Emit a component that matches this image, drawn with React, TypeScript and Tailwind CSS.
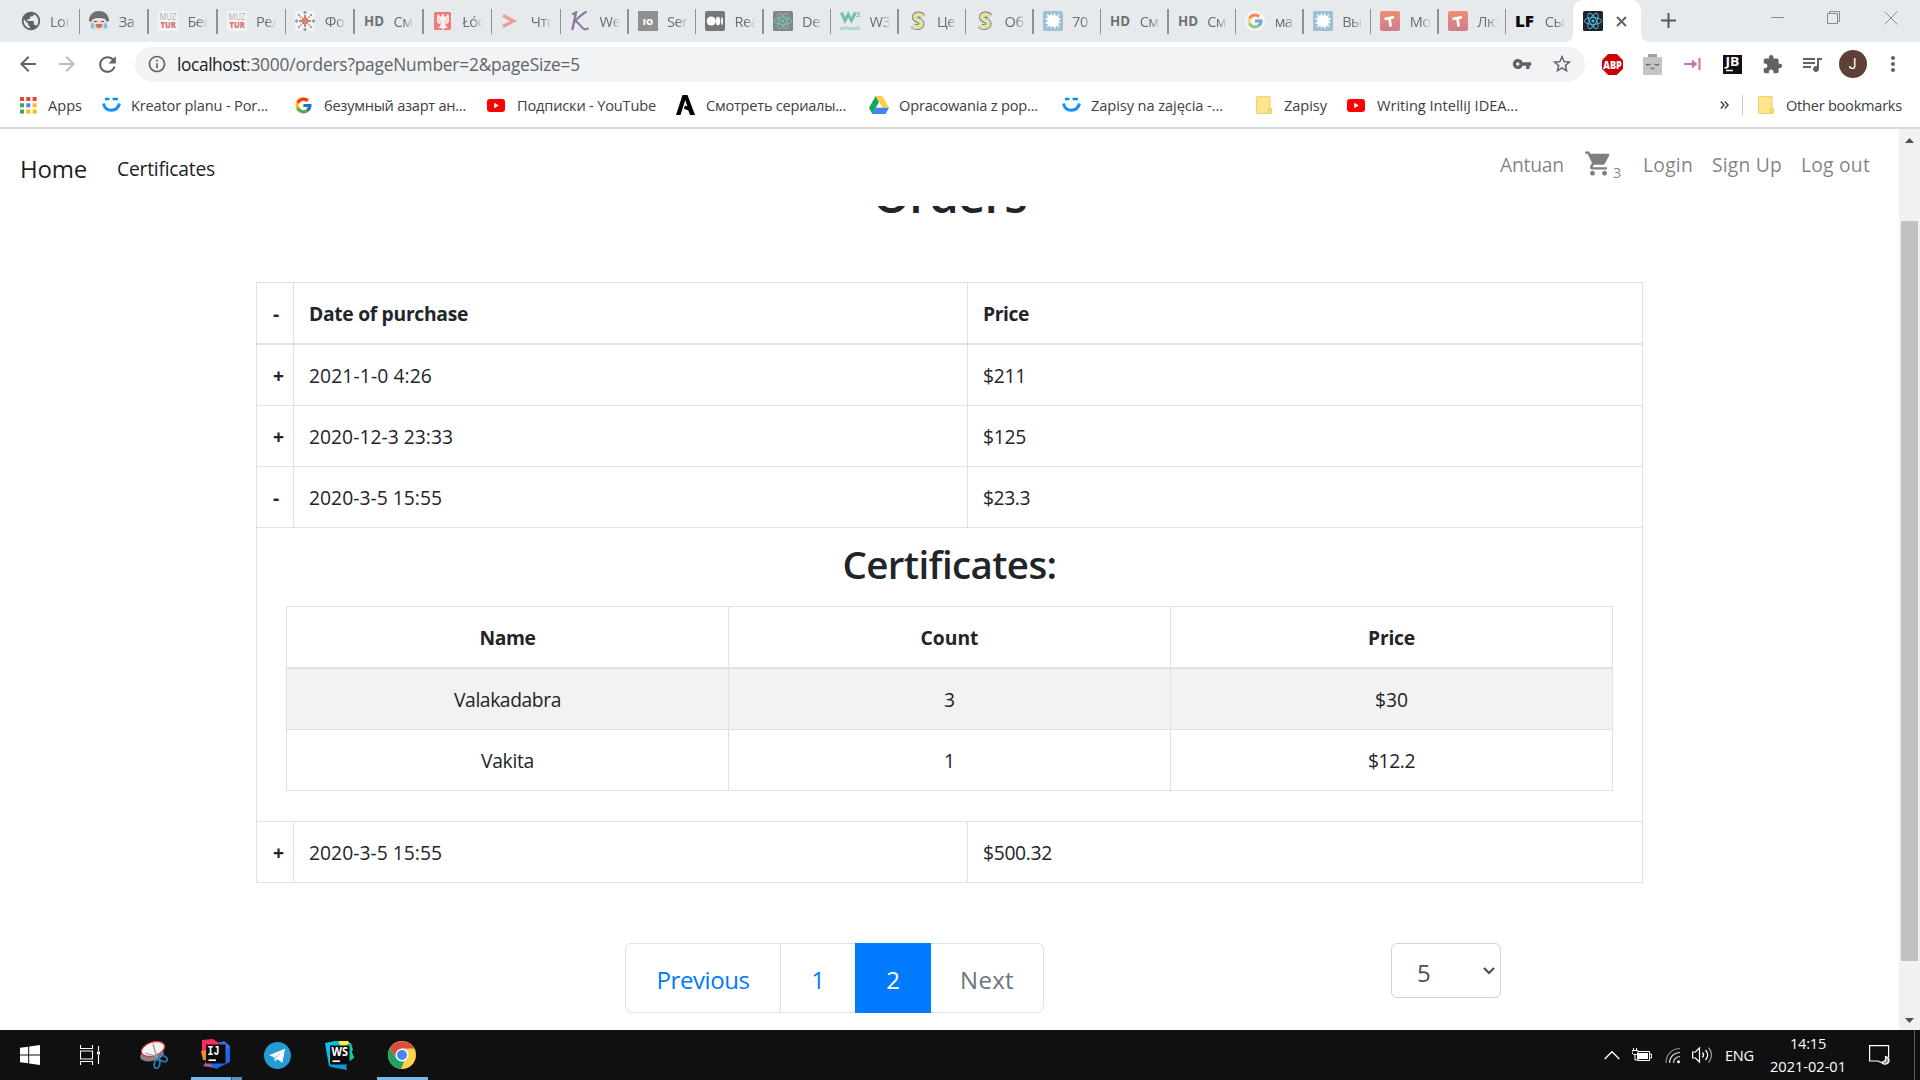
import React, { useLayoutEffect, useRef, useState } from 'react';
import {
  MdArrowBack, MdArrowForward, MdRefresh, MdInfoOutline, MdVpnKey, MdStarBorder,
  MdExtension, MdQueueMusic, MdMoreVert, MdShoppingCart, MdPublic,
} from 'react-icons/md';
import { FcGoogle } from 'react-icons/fc';

/* Text set to a fixed advance width through letter spacing. */
function Label({ w, className = '', children }: { w: number; className?: string; children: string }) {
  const ref = useRef<HTMLSpanElement>(null);
  const [spacing, setSpacing] = useState(0);
  useLayoutEffect(() => {
    if (!ref.current) return;
    const natural = ref.current.getBoundingClientRect().width;
    setSpacing((w - natural) / children.length);
  }, [w, children]);
  return (
    <span ref={ref} style={{ letterSpacing: spacing }} className={`inline-block shrink-0 whitespace-pre ${className}`}>
      {children}
    </span>
  );
}

/* ---------- Favicons ---------- */

function MuzTur() {
  return (
    <svg width="20" height="20" viewBox="0 0 20 20">
      <rect width="20" height="20" fill="#f3f3f3" />
      <text x="1.500" y="9" fontSize="9" fontFamily="Open Sans, sans-serif" fill="#b0b0b0" textLength="17" lengthAdjust="spacingAndGlyphs">MUZ</text>
      <text x="2.500" y="16.500" fontSize="9" fontWeight="800" fontFamily="Open Sans, sans-serif" fill="#df7077" textLength="15.500" lengthAdjust="spacingAndGlyphs">TUR</text>
    </svg>
  );
}

function Face() {
  return (
    <svg width="20" height="20" viewBox="0 0 20 20">
      <path d="M3 9h14v5c0 3-3.500 5.500-7 5.500S3 17 3 14z" fill="#f0d8d0" />
      <path d="M0 10C0 3 5 0 10 0s10 3 10 10l-2 1-2-3c-4-1.500-8-1.500-12 0l-2 3z" fill="#6c6e70" />
      <path d="M5 10.500l3 0M12 10.500l3 0" stroke="#555" strokeWidth="1.200" />
      <path d="M6.500 13h7c0 3-1.700 4-3.500 4s-3.500-1-3.500-4z" fill="#c0736f" />
      <path d="M2.500 12h2l1 5-3 1-1-2zM17.500 12h-2l-1 5 3 1 1-2z" fill="#6fc8ea" />
    </svg>
  );
}

function Ornament() {
  return (
    <svg width="20" height="20" viewBox="0 0 20 20">
      <rect width="20" height="20" fill="#f3f3f3" />
      <g fill="#7fa9cc">
        <path d="M9 0h2v3H9zM8 1h4v1H8zM9 17h2v3H9zM8 18h4v1H8zM0 9h3v2H0zM1 8h1v4H1zM17 9h3v2h-3zM18 8h1v4h-1z" />
        <path d="M3 3h2v2H3zM15 3h2v2h-2zM3 15h2v2H3zM15 15h2v2h-2z" />
      </g>
      <path d="M9 4h2v3h2v2h3v2h-3v2h-2v3H9v-3H7v-2H4V9h3V7h2z" fill="#df7a72" />
      <path d="M5 5h2v2H5zM13 5h2v2h-2zM5 13h2v2H5zM13 13h2v2h-2z" fill="#e9b97b" />
      <path d="M7 7h1.500v1.500H7zM11.500 7H13v1.500h-1.500zM7 11.500h1.500V13H7zM11.500 11.500H13V13h-1.500z" fill="#df7a72" />
      <path d="M8.500 8.500h3v3h-3z" fill="#78b48a" />
    </svg>
  );
}

function HD() {
  return (
    <svg width="20" height="20" viewBox="0 0 20 20">
      <text x="0" y="15" fontSize="14" fontWeight="700" fontFamily="Open Sans, sans-serif" fill="#6f7173" textLength="20" lengthAdjust="spacingAndGlyphs">HD</text>
    </svg>
  );
}

function Eagle() {
  return (
    <svg width="20" height="20" viewBox="0 0 20 20">
      <rect x="1" y="1" width="17" height="18" rx="1" fill="#ef7b7b" />
      <path d="M9 3l2 0 0 2 1 1 3-3 1 2v6l-2 2-2-1 1 3 2 2h-3l-2 2-2-2H5l2-2 1-3-2 1-2-2V5l1-2 3 3 1-1z" fill="#faf0f0" />
      <path d="M6 6v5M14 6v5M8 9v3M12 9v3" stroke="#ef9b9b" strokeWidth=".6" />
    </svg>
  );
}

function Angle() {
  return (
    <svg width="20" height="20" viewBox="0 0 20 20">
      <path d="M2 4.500l10.500 5.500L2 15.500" fill="none" stroke="#eb9d96" strokeWidth="3.400" />
    </svg>
  );
}

function KLetter() {
  return (
    <svg width="20" height="20" viewBox="0 0 20 20" fill="none" stroke="#8c7a9e" strokeLinecap="round">
      <path d="M3 3l3-1.500L2.500 18" strokeWidth="2.400" />
      <path d="M16 1C12 3 8 7 5 10c4 1 6 7 9 8 1.500.5 2.500 0 4-.5" strokeWidth="2" />
    </svg>
  );
}

function Square10() {
  return (
    <svg width="20" height="20" viewBox="0 0 20 20">
      <rect width="20" height="20" fill="#8f8f8f" />
      <text x="10" y="13.500" fontSize="9" fontWeight="800" fontFamily="Open Sans, sans-serif" textAnchor="middle" fill="#fff">IO</text>
    </svg>
  );
}

function Medium() {
  return (
    <svg width="20" height="20" viewBox="0 0 20 20">
      <rect width="20" height="20" rx="2" fill="#757778" />
      <g fill="#fff">
        <circle cx="6.200" cy="10" r="4.600" />
        <ellipse cx="13" cy="10" rx="2.200" ry="4.200" />
        <ellipse cx="17" cy="10" rx="0.900" ry="4" />
      </g>
    </svg>
  );
}

function Atom({ bg, fg }: { bg: string; fg: string }) {
  return (
    <svg width="20" height="20" viewBox="0 0 20 20">
      <rect width="20" height="20" rx="1.500" fill={bg} />
      <g fill="none" stroke={fg} strokeWidth="0.950">
        <ellipse cx="10" cy="10" rx="8.600" ry="3.400" />
        <ellipse cx="10" cy="10" rx="8.600" ry="3.400" transform="rotate(60 10 10)" />
        <ellipse cx="10" cy="10" rx="8.600" ry="3.400" transform="rotate(120 10 10)" />
      </g>
      <circle cx="10" cy="10" r="1.600" fill={fg} />
    </svg>
  );
}

function W3() {
  return (
    <svg width="20" height="20" viewBox="0 0 20 20">
      <path d="M1.500 1.500l3.500 8 3.200-6 3.200 6 4-8" fill="none" stroke="#73c3a6" strokeWidth="3" />
      <text x="16" y="6" fontSize="7" fontWeight="700" fontFamily="Open Sans, sans-serif" fill="#73c3a6">3</text>
      <text x="0" y="19" fontSize="5.500" fontWeight="600" fontFamily="Open Sans, sans-serif" fill="#73c3a6" textLength="20">schools</text>
    </svg>
  );
}

function SLetter() {
  const d = 'M14.500 5.500C12.500 2.500 6.500 3 7 6.500c.5 3 6.500 2.500 6.500 6C13.500 16.500 7.500 17 5 14.500';
  return (
    <svg width="20" height="20" viewBox="0 0 20 20" fill="none">
      <path d={d} stroke="#77797b" strokeWidth="6" />
      <path d={d} stroke="#d9d9d9" strokeWidth="4.200" />
      <path d={d} stroke="#e9e486" strokeWidth="2.400" />
    </svg>
  );
}

function Splat() {
  return (
    <svg width="20" height="20" viewBox="0 0 20 20">
      <rect width="20" height="20" rx="1.500" fill="#9fc1d5" />
      <circle cx="10" cy="10" r="5" fill="#fff" />
      <path d="M10 5l2-3 .8 3.500L16.500 3 15 6.500l3 1L15.500 10l2.500 2-3 .6 1.500 3.900-3.300-1.800L12 18l-2-3-2.200 2.500L7.500 14.500 3.800 16.500 5.200 13 2 12.500 4.800 10 2 7.500l3-.8L3.500 3 7.200 5 8 2z" fill="#fff" />
    </svg>
  );
}

function TLetter() {
  return (
    <svg width="20" height="20" viewBox="0 0 20 20">
      <defs>
        <linearGradient id="tgrad" x1="0" y1="0" x2="0" y2="1">
          <stop offset="0" stopColor="#ef8d78" />
          <stop offset="1" stopColor="#cb7e8b" />
        </linearGradient>
      </defs>
      <rect width="20" height="20" rx="2" fill="url(#tgrad)" />
      <path d="M4.500 8l9.500-1.800M9.600 7.500l1 8" stroke="#fff" strokeWidth="2.700" fill="none" />
    </svg>
  );
}

function LF() {
  return (
    <svg width="20" height="20" viewBox="0 0 20 20">
      <text x="0" y="15.500" fontSize="16" fontWeight="800" fontFamily="Open Sans, sans-serif" fill="#0a0a0a" textLength="19" lengthAdjust="spacingAndGlyphs">LF</text>
    </svg>
  );
}

function GoogleDim() {
  return (
    <span className="flex size-5 items-center justify-center rounded-full bg-[#f6f7f8]">
      <FcGoogle size={18} className="opacity-60" />
    </span>
  );
}

const tabs: { icon: React.ReactNode; title: string; wide?: boolean }[] = [
  { icon: <MdPublic size={22} className="-m-px text-[#5f6368]" />, title: 'Lon', wide: true },
  { icon: <Face />, title: 'За', wide: true },
  { icon: <MuzTur />, title: 'Бес', wide: true },
  { icon: <MuzTur />, title: 'Рел', wide: true },
  { icon: <Ornament />, title: 'Фо', wide: true },
  { icon: <HD />, title: 'См', wide: true },
  { icon: <Eagle />, title: 'Łód', wide: true },
  { icon: <Angle />, title: 'Что', wide: true },
  { icon: <KLetter />, title: 'We' },
  { icon: <Square10 />, title: 'Ser' },
  { icon: <Medium />, title: 'Rea' },
  { icon: <Atom bg="#838589" fg="#78c5b0" />, title: 'De' },
  { icon: <W3 />, title: 'W3' },
  { icon: <SLetter />, title: 'Це' },
  { icon: <SLetter />, title: 'Об' },
  { icon: <Splat />, title: '70' },
  { icon: <HD />, title: 'См' },
  { icon: <HD />, title: 'См' },
  { icon: <GoogleDim />, title: 'ма' },
  { icon: <Splat />, title: 'Вы' },
  { icon: <TLetter />, title: 'Мо' },
  { icon: <TLetter />, title: 'Лю' },
  { icon: <LF />, title: 'Сы' },
];

function TabStrip() {
  return (
    <div className="flex h-[42px] shrink-0 bg-[#e7eaed] pl-[11.500px]">
      {tabs.map((t, i) => (
        <div key={i} className={`flex shrink-0 items-center ${t.wide ? 'w-[68.7px]' : 'w-[67.53px]'}`}>
          <span className="ml-[9px] w-5 shrink-0">{t.icon}</span>
          <span className="ml-[9.500px] w-[21px] shrink-0 overflow-hidden whitespace-nowrap text-[14.600px] leading-5 tracking-[-0.500px] text-[#6a6d71] [mask-image:linear-gradient(to_right,black_50%,transparent)]">
            {t.title}
          </span>
          {i < 22 && <span className="ml-auto h-[25px] w-[1.500px] bg-[#8f9295]" />}
        </div>
      ))}
      <div className="relative -ml-[1px] flex h-[42px] w-[68px] shrink-0 items-center rounded-t-[10px] bg-white">
        <svg className="absolute bottom-0 -left-[8px]" width="8" height="8" viewBox="0 0 8 8"><path d="M8 0v8H0a8 8 0 0 0 8-8z" fill="#fff" /></svg>
        <svg className="absolute -right-[8px] bottom-0" width="8" height="8" viewBox="0 0 8 8"><path d="M0 0v8h8a8 8 0 0 1-8-8z" fill="#fff" /></svg>
        <span className="ml-[10px]"><Atom bg="#20232a" fg="#51b9d8" /></span>
        <svg className="ml-[13px]" width="11" height="11" viewBox="0 0 11 11"><path d="M1 1l9 9M10 1l-9 9" stroke="#5f6368" strokeWidth="2" /></svg>
      </div>
      <svg className="mt-[13px] ml-[20px] shrink-0" width="15" height="15" viewBox="0 0 15 15"><path d="M7.500 0v15M0 7.500h15" stroke="#55585c" strokeWidth="2" /></svg>
      <div className="ml-auto flex h-[36px] items-center gap-[43px] pr-[22px]">
        <svg width="14" height="14" viewBox="0 0 14 14"><path d="M1 6.500h13" stroke="#8a8c8e" strokeWidth="1" /></svg>
        <svg width="14" height="14" viewBox="0 0 14 14" fill="none" stroke="#8a8c8e"><path d="M.5 2.500h10v10H.5zM2.500 2.500V.5h10v10h-2" /></svg>
        <svg width="14" height="14" viewBox="0 0 14 14"><path d="M.5.5l13 13M13.500.5L.5 13.500" stroke="#8a8c8e" /></svg>
      </div>
    </div>
  );
}

function Toolbar() {
  return (
    <div className="flex h-[44px] shrink-0 items-center bg-white text-[#5f6368]">
      <span className="flex w-[47px] justify-center pl-[8px]"><MdArrowBack size={24} /></span>
      <span className="flex w-[40px] justify-center text-[#babcbe]"><MdArrowForward size={24} /></span>
      <span className="flex w-[40px] justify-center"><MdRefresh size={25} /></span>
      <div className="ml-[8px] flex h-[35px] w-[1450px] shrink-0 items-center rounded-full bg-[#f1f3f4] pl-[12px]">
        <MdInfoOutline size={20} />
        <Label w={69} className="ml-[10px] pt-px text-[17.300px] leading-6 text-[#202124]">localhost</Label>
        <Label w={334} className="pt-px text-[17.300px] leading-6">:3000/orders?pageNumber=2&pageSize=5</Label>
        <div className="ml-auto flex items-center gap-[19px] pr-[12px]">
          <MdVpnKey size={20} />
          <MdStarBorder size={22} />
        </div>
      </div>
      <div className="ml-[7px] flex shrink-0 items-center [&>*]:flex [&>*]:w-10 [&>*]:justify-center">
        <span>
          <svg width="21" height="21" viewBox="0 0 21 21">
            <path d="M6.200 0h8.600L21 6.200v8.600L14.800 21H6.200L0 14.800V6.200z" fill="#cc0000" />
            <text x="1.300" y="14.500" fontSize="11" fontWeight="800" fontFamily="Open Sans, sans-serif" fill="#fff" textLength="18.500" lengthAdjust="spacingAndGlyphs">ABP</text>
          </svg>
        </span>
        <span>
          <svg width="19" height="21" viewBox="0 0 19 21">
            <path d="M5 0h9v3H5z" fill="#a2a2a2" />
            <rect y="3" width="19" height="18" rx="1" fill="#c4c4c4" />
            <path d="M3 10q2 2 4.500 0M11.500 10q2.500 2 4.500 0M8 14q1.500 1.300 3 0" stroke="#666" strokeWidth="1.200" fill="none" />
          </svg>
        </span>
        <span>
          <svg width="17" height="12" viewBox="0 0 17 12"><path d="M0 6h11M15.500 0v12" stroke="#c473b6" strokeWidth="2" /><path d="M8 1.500L13.500 6 8 10.500z" fill="#c473b6" /></svg>
        </span>
        <span>
          <svg width="19" height="19" viewBox="0 0 19 19">
            <rect width="19" height="19" fill="#101010" />
            <text x="2.500" y="11" fontSize="12" fontWeight="700" fontFamily="Open Sans, sans-serif" fill="#fff" textLength="14" lengthAdjust="spacingAndGlyphs">JB</text>
            <path d="M3 15.500h7" stroke="#fff" strokeWidth="1.500" />
          </svg>
        </span>
        <span><MdExtension size={21} /></span>
        <span><MdQueueMusic size={24} /></span>
        <span>
          <i className="ml-px flex size-7 items-center justify-center rounded-full bg-[#5d4037] font-[Roboto,sans-serif] text-[14px] not-italic text-white">J</i>
        </span>
        <span><MdMoreVert size={24} className="ml-px" /></span>
      </div>
    </div>
  );
}

function AppsIcon() {
  const c = ['#ea4335', '#ea4335', '#ea4335', '#34a853', '#4285f4', '#fbbc05', '#34a853', '#fbbc05', '#fbbc05'];
  return (
    <svg width="17" height="17" viewBox="0 0 17 17" className="ml-0.5">
      {c.map((f, i) => <rect key={i} x={(i % 3) * 6.300} y={Math.floor(i / 3) * 6.300} width="4" height="4" fill={f} />)}
    </svg>
  );
}
function Smile() {
  return (
    <svg width="19" height="16" viewBox="0 0 19 16" fill="none" stroke="#1290f5" className="ml-px">
      <path d="M3 2h4.500M10.500 2H16" strokeWidth="2.400" />
      <path d="M1.500 6.500c2 9 13.500 9 16 0" strokeWidth="3" />
    </svg>
  );
}
function YouTube() {
  return (
    <svg width="18" height="13" viewBox="0 0 18 13"><rect width="18" height="13" rx="3" fill="#f00" /><path d="M7.200 3.800l4.600 2.700-4.600 2.700z" fill="#fff" /></svg>
  );
}
function ALetter() {
  return (
    <svg width="19" height="20" viewBox="0 0 19 20"><path d="M0 20L6.500 0h5L19 20h-5l-1.600-4.500-4.500-1.700L9 10.500l2.300.8L9.300 5 4.500 20z" fill="#000" /></svg>
  );
}
function Drive() {
  return (
    <svg width="20" height="18" viewBox="0 0 20 18">
      <path d="M6.700 0L0 11.700 3.300 18 10 6z" fill="#11a861" />
      <path d="M6.700 0h6.600L20 11.700h-6.500z" fill="#ffcf48" />
      <path d="M6.500 11.700H20L16.700 18H3.300z" fill="#4285f4" />
    </svg>
  );
}
function Folder() {
  return (
    <svg width="16" height="18" viewBox="0 0 16 18" className="ml-[2px]">
      <path d="M1 .5h13v17H1q-.5 0-.5-.5V1z" fill="#ffe48e" stroke="#f1d06a" />
      <path d="M12.500 12.500h3V17l-1 .5h-2z" fill="#ffd95e" stroke="#edc34b" strokeWidth=".8" />
    </svg>
  );
}

const bookmarks = [
  { icon: <AppsIcon />, text: 'Apps', tw: 34, box: 'w-[83px]' },
  { icon: <Smile />, text: 'Kreator planu - Por...', tw: 137, box: 'w-[193px]' },
  { icon: <FcGoogle size={19} />, text: 'безумный азарт ан...', tw: 142, box: 'w-[193px]' },
  { icon: <YouTube />, text: 'Подписки - YouTube', tw: 139, box: 'w-[189px]' },
  { icon: <ALetter />, text: 'Смотреть сериалы...', tw: 140, box: 'w-[193px]' },
  { icon: <Drive />, text: 'Opracowania z pop...', tw: 139, box: 'w-[192px]' },
  { icon: <Smile />, text: 'Zapisy na zajęcia -...', tw: 132, box: 'w-[193px]' },
  { icon: <Folder />, text: 'Zapisy', tw: 43, box: 'w-[93px]' },
  { icon: <YouTube />, text: 'Writing IntelliJ IDEA...', tw: 141, box: 'w-[190px]' },
];

function BookmarkBar() {
  return (
    <div className="flex h-[43px] shrink-0 items-center border-b-2 border-[#dadce0] bg-white pb-[3px] pl-[18px] text-[14.600px] leading-5 text-[#3c4043]">
      {bookmarks.map((b, i) => (
        <div key={i} className={`flex h-full shrink-0 items-center ${b.box}`}>
          <span className="flex w-[30px] shrink-0">{b.icon}</span>
          <Label w={b.tw}>{b.text}</Label>
        </div>
      ))}
      <svg className="ml-auto" width="9" height="8" viewBox="0 0 9 8" fill="none" stroke="#44474a" strokeWidth="1.500"><path d="M.8.5L4 4 .8 7.500M4.800.5L8 4 4.800 7.500" /></svg>
      <span className="ml-[13px] h-5 w-px bg-[#c4c7cb]" />
      <span className="ml-[13px] flex w-[30px]"><Folder /></span>
      <Label w={116} className="mr-[18px]">Other bookmarks</Label>
    </div>
  );
}

/* ---------- Page ---------- */

function Navbar() {
  return (
    <nav className="relative z-10 flex h-[77px] shrink-0 bg-white pl-[20px] text-[19.300px] leading-[30px]">
      <Label w={67} className="mt-[21px] h-[38px] text-[24px] leading-[38px] text-black/90">Home</Label>
      <Label w={98} className="mt-[25px] ml-[30px] text-black/90">Certificates</Label>
      <div className="mt-[21px] ml-auto flex h-[30px] pr-[29px] text-black/50">
        <Label w={64}>Antuan</Label>
        <MdShoppingCart size={29} className="mt-[-1px] ml-[20px]" />
        <span className="mt-[8px] w-[10px] text-[14.500px]">3</span>
        <Label w={50} className="ml-[20px]">Login</Label>
        <Label w={70} className="ml-[19px]">Sign Up</Label>
        <Label w={69} className="ml-[19px]">Log out</Label>
      </div>
    </nav>
  );
}

function OrderRow({ open, date, dw, price, pw }: { open?: boolean; date: string; dw: number; price: string; pw: number }) {
  return (
    <div className="flex h-[61px] [&>*]:flex [&>*]:items-center [&>*]:border-r [&>*]:border-b [&>*]:border-[#dee2e6] [&>*]:pt-[2px]">
      <div className="w-[37px] pl-4 font-bold">{open ? '-' : '+'}</div>
      <div className="w-[674px] pl-[15px]"><Label w={dw}>{date}</Label></div>
      <div className="w-[675px] pl-[15px]"><Label w={pw}>{price}</Label></div>
    </div>
  );
}

const certificates = [
  { name: 'Valakadabra', nw: 107, count: '3', price: '$30', pw: 33 },
  { name: 'Vakita', nw: 53, count: '1', price: '$12.2', pw: 47 },
];

function CertificateTable() {
  return (
    <div className="mt-[15px] ml-[29px] w-[1327px] border-t border-l border-[#dee2e6]">
      <div className="flex h-[62px] font-bold [&>*]:flex [&>*]:items-center [&>*]:justify-center [&>*]:border-r [&>*]:border-b-2 [&>*]:border-[#dee2e6] [&>*]:pt-[2px]">
        <div className="w-[442px]"><Label w={56}>Name</Label></div>
        <div className="w-[442px]"><Label w={58}>Count</Label></div>
        <div className="w-[442px]"><Label w={47}>Price</Label></div>
      </div>
      {certificates.map((c, i) => (
        <div key={i} className={`flex h-[61px] [&>*]:flex [&>*]:items-center [&>*]:justify-center [&>*]:border-r [&>*]:border-b [&>*]:border-[#dee2e6] [&>*]:pt-[2px] ${i === 0 ? 'bg-[#f2f2f2]' : ''}`}>
          <div className="w-[442px]"><Label w={c.nw}>{c.name}</Label></div>
          <div className="w-[442px]"><Label w={11}>{c.count}</Label></div>
          <div className="w-[442px]"><Label w={c.pw}>{c.price}</Label></div>
        </div>
      ))}
    </div>
  );
}

function Orders() {
  return (
    <main className="flex flex-col">
      <div className="-mt-[41px] flex h-[57px] justify-center"><Label w={154} className="text-[48px] leading-[60px] font-semibold">Orders</Label></div>
      <div className="mt-[60px] ml-[256px] w-[1387px] border-t border-l border-[#dee2e6] text-[19.300px] leading-[30px]">
        <div className="flex h-[62px] font-bold [&>*]:flex [&>*]:items-center [&>*]:border-r [&>*]:border-b-2 [&>*]:border-[#dee2e6] [&>*]:pt-[2px]">
          <div className="w-[37px] pl-4">-</div>
          <div className="w-[674px] pl-[15px]"><Label w={159}>Date of purchase</Label></div>
          <div className="w-[675px] pl-[15px]"><Label w={46}>Price</Label></div>
        </div>
        <OrderRow date="2021-1-0 4:26" dw={123} price="$211" pw={43} />
        <OrderRow date="2020-12-3 23:33" dw={144} price="$125" pw={43} />
        <OrderRow open date="2020-3-5 15:55" dw={133} price="$23.3" pw={47} />
        <div className="flex h-[294px] flex-col border-r border-b border-[#dee2e6]">
          <div className="mt-[16px] flex h-[47px] justify-center"><Label w={214} className="text-[38.500px] leading-[40px] font-semibold">Certificates:</Label></div>
          <CertificateTable />
        </div>
        <OrderRow date="2020-3-5 15:55" dw={133} price="$500.32" pw={69} />
      </div>
      <div className="mt-[60px] flex pl-[625px] text-[24px]">
        <div className="flex h-[70px] w-[419px] rounded-md border border-[#dee2e6] text-[#007bff]">
          <span className="flex w-[155px] items-center justify-center border-r border-[#dee2e6] pt-[3px]"><Label w={93}>Previous</Label></span>
          <span className="flex w-[74px] items-center justify-center pt-[3px]">1</span>
          <span className="-my-px flex w-[76px] items-center justify-center bg-[#007bff] pt-[3px] text-white">2</span>
          <span className="flex flex-1 items-center justify-center pt-[3px] text-[#6c757d]"><Label w={54}>Next</Label></span>
        </div>
        <div className="ml-[347px] flex h-[55px] w-[110px] items-center rounded-md border border-[#ced4da] pt-[5px] pl-[25px] text-[#495057]">
          5
          <svg className="mt-[-5px] mr-[5px] ml-auto" width="12" height="8" viewBox="0 0 12 8"><path d="M1 1l5 5 5-5" fill="none" stroke="#495057" strokeWidth="2.200" /></svg>
        </div>
      </div>
    </main>
  );
}

function Scrollbar() {
  return (
    <div className="flex w-[21px] shrink-0 flex-col items-center bg-[#f1f1f1]">
      <svg className="mt-[9px]" width="9" height="5" viewBox="0 0 9 5"><path d="M4.500 0L9 5H0z" fill="#505050" /></svg>
      <div className="mt-[78px] h-[740px] w-[17px] bg-[#c1c1c1]" />
      <svg className="mt-auto mb-[7px]" width="9" height="5" viewBox="0 0 9 5"><path d="M4.500 5L9 0H0z" fill="#505050" /></svg>
    </div>
  );
}

/* ---------- Taskbar ---------- */

function JetIcon({ text, shape }: { text: string; shape: React.ReactNode }) {
  return (
    <svg width="30" height="30" viewBox="0 0 30 30">
      {shape}
      <rect x="5" y="5.500" width="19.500" height="19" fill="#0b0b0b" />
      <text x="6.500" y="16" fontSize="12" fontWeight="700" fontFamily={text === 'IJ' ? 'Liberation Mono, monospace' : 'Open Sans, sans-serif'} fill="#fff" textLength={text === 'IJ' ? 12 : 16.500} lengthAdjust="spacingAndGlyphs">{text}</text>
      <path d="M7.500 21.200h7.500" stroke="#fff" strokeWidth="1.700" />
    </svg>
  );
}

function Taskbar() {
  return (
    <div className="flex h-[50px] shrink-0 bg-[#101010] text-white">
      <div className="flex w-[60px] items-center justify-center">
        <svg width="20" height="20" viewBox="0 0 20 20"><path d="M0 2.800l8.200-1.100v7.800H0zM9.200 1.500L20 0v9.500H9.200zM0 10.500h8.200v7.800L0 17.200zM9.200 10.500H20V20L9.200 18.500z" fill="#fff" /></svg>
      </div>
      <div className="flex w-[60px] items-center justify-center">
        <svg width="20" height="20" viewBox="0 0 20 20" fill="none" stroke="#fff" strokeWidth="1.100"><path d="M.5 0v3.500h12V0M.5 20v-3.500h12V20M.5 6h12v8H.5zM18.500 1v5M18.500 10v9" /><rect x="17" y="6.500" width="3" height="3" fill="#fff" stroke="none" /></svg>
      </div>
      <div className="ml-[3px] flex w-[62px] items-center justify-center">
        <svg width="28" height="28" viewBox="0 0 28 28">
          <ellipse cx="12" cy="14" rx="12" ry="6" fill="#858585" transform="rotate(-12 12 14)" />
          <ellipse cx="13" cy="8" rx="12" ry="6.800" fill="#f4f4f4" stroke="#d5393c" strokeWidth="1.200" transform="rotate(-18 13 8)" />
          <path d="M13 3l4 14M5 12l14 4" stroke="#999" strokeWidth="1.300" />
          <g fill="none" stroke="#2183c4" strokeWidth="1.700">
            <ellipse cx="23" cy="17.500" rx="4.500" ry="2.800" transform="rotate(25 23 17.500)" />
            <ellipse cx="17" cy="23" rx="2.800" ry="4.500" transform="rotate(12 17 23)" />
          </g>
        </svg>
      </div>
      <div className="ml-[6px] flex w-[51px] flex-col items-center">
        <span className="mt-[9px] mb-[8px] -ml-px h-[30px]">
          <JetIcon text="IJ" shape={<>
            <path d="M1 1l11-1 6 4 4 12-12 4L1 12z" fill="#fb2c62" />
            <path d="M0 12l10-2v12L2 21z" fill="#f08a2c" />
            <path d="M2 27l7-10 10 8-4 4z" fill="#a85a9b" />
            <path d="M18 4l5-2 6 5v16l-14 7-5-4z" fill="#1b66e8" />
            <path d="M18 3l6 0 4 4-4 10z" fill="#4b6cd8" />
          </>} />
        </span>
        <span className="flex h-[3px] w-full"><i className="h-full w-[40px] bg-[#76b9ed]" /><i className="h-full w-px bg-[#31506b]" /><i className="h-full w-[10px] bg-[#5c8fb9]" /></span>
      </div>
      <div className="ml-[5px] flex w-[61px] items-center justify-center">
        <svg width="27" height="27" viewBox="0 0 27 27">
          <circle cx="13.500" cy="13.500" r="13.500" fill="#269bd5" />
          <path d="M5 13.200L21 6.800l-2.600 14-5-3.600-2.400 2.300-.8-4.300z" fill="#fff" />
          <path d="M10.200 15.200l8.300-6-6.300 7.300-1.200 3z" fill="#bfdcec" />
        </svg>
      </div>
      <div className="ml-px flex w-[62px] items-center justify-center">
        <JetIcon text="WS" shape={<>
          <path d="M0 3l10-2 14 2 5 15-6 4-3 7-16-3z" fill="#07c3e6" />
          <path d="M13 1l10 0 4 6-6 9z" fill="#f3f03e" />
          <path d="M21 5l5-2 2 7-2 3 3 4-4 4z" fill="#11c9a9" />
          <path d="M5 23l15-2 2 9-16-3z" fill="#1296d8" />
        </>} />
      </div>
      <div className="ml-[6px] flex w-[51px] flex-col items-center">
        <svg className="mt-[11px] mb-[8px] -ml-px" width="28" height="28" viewBox="0 0 28 28">
          <circle cx="14" cy="14" r="14" fill="#fdd14b" />
          <path d="M1.900 7A14 14 0 0 1 26.100 7.500H14L8.400 17.200z" fill="#da4c3f" />
          <path d="M1.900 7L8.200 17.500 14 20.500h2L13 28A14 14 0 0 1 1.900 7z" fill="#1ea362" />
          <circle cx="14" cy="14" r="6.500" fill="#fff" />
          <circle cx="14" cy="14" r="5" fill="#4285f4" />
        </svg>
        <span className="h-[3px] w-full bg-[#76b9ed]" />
      </div>

      <div className="ml-auto flex items-center">
        <svg width="16" height="10" viewBox="0 0 16 10"><path d="M.7 9L8 1.700 15.300 9" fill="none" stroke="#fff" strokeWidth="1.300" /></svg>
        <svg className="ml-[12px]" width="20" height="14" viewBox="0 0 20 14"><path d="M6 3.500h11.500v9H6v-4M17.500 6h2v4h-2" fill="none" stroke="#fff" /><rect x="5" y="5" width="11" height="6" fill="#fff" /><path d="M1.500 0v2M4.500 0v2M0 2.500h6V5L4.500 6.500h-3L0 5zM3 6v6h3" fill="none" stroke="#fff" /></svg>
        <svg className="ml-[13px]" width="16" height="17" viewBox="0 0 16 17" fill="none" stroke="#ccc" strokeWidth="1.200"><path d="M1 16C1 7.500 7 1.500 15 1.500" stroke="#8a8a8a" /><path d="M4.500 16C4.500 10 9 5.500 15 5.500M8.500 16c0-4 3-6.500 6.500-6.500" /><circle cx="13.500" cy="14.800" r="1.500" fill="#fff" stroke="none" /></svg>
        <svg className="ml-[11px]" width="21" height="18" viewBox="0 0 21 18" fill="none" stroke="#fff" strokeWidth="1.200"><path d="M.6 6h2.800L7.500 2v14L3.400 12H.6zM10.500 6.500c1.300 1.500 1.300 3.500 0 5M13.500 4c2.600 3 2.600 7 0 10" /><path d="M16.500 1.500c4 4.500 4 10.500 0 15" stroke="#999" /></svg>
        <Label w={29} className="ml-[12px] pt-px text-[14.600px]">ENG</Label>
        <div className="ml-[15px] flex w-[78px] flex-col items-center text-[14.600px] leading-[24px]">
          <Label w={36} className="h-[22px] leading-[22px]">14:15</Label>
          <Label w={76}>2021-02-01</Label>
        </div>
        <svg className="ml-[22px]" width="21" height="20" viewBox="0 0 21 20" fill="none" stroke="#fff" strokeWidth="1.200"><path d="M12 17.500l-3-1.500H.6V.6h19v12" /><path d="M16.500 11.500c1 3-1 5.500-4 5.800 2.500 3.500 8 1.500 7.500-2.500-.3-2-1.500-3-3.500-3.300z" fill="#999" /></svg>
        <span className="ml-[24px] h-[50px] w-px bg-[#5c5c5c]" />
        <span className="w-[5px]" />
      </div>
    </div>
  );
}

export default function App() {
  return (
    <div className="flex h-[1080px] w-[1920px] flex-col overflow-hidden bg-white font-['Open_Sans','Noto_Sans',sans-serif] text-[#212529]">
      <TabStrip />
      <Toolbar />
      <BookmarkBar />
      <div className="flex min-h-0 flex-1 bg-white">
        <div className="flex min-w-0 flex-1 flex-col overflow-hidden">
          <Navbar />
          <Orders />
        </div>
        <Scrollbar />
      </div>
      <Taskbar />
    </div>
  );
}
